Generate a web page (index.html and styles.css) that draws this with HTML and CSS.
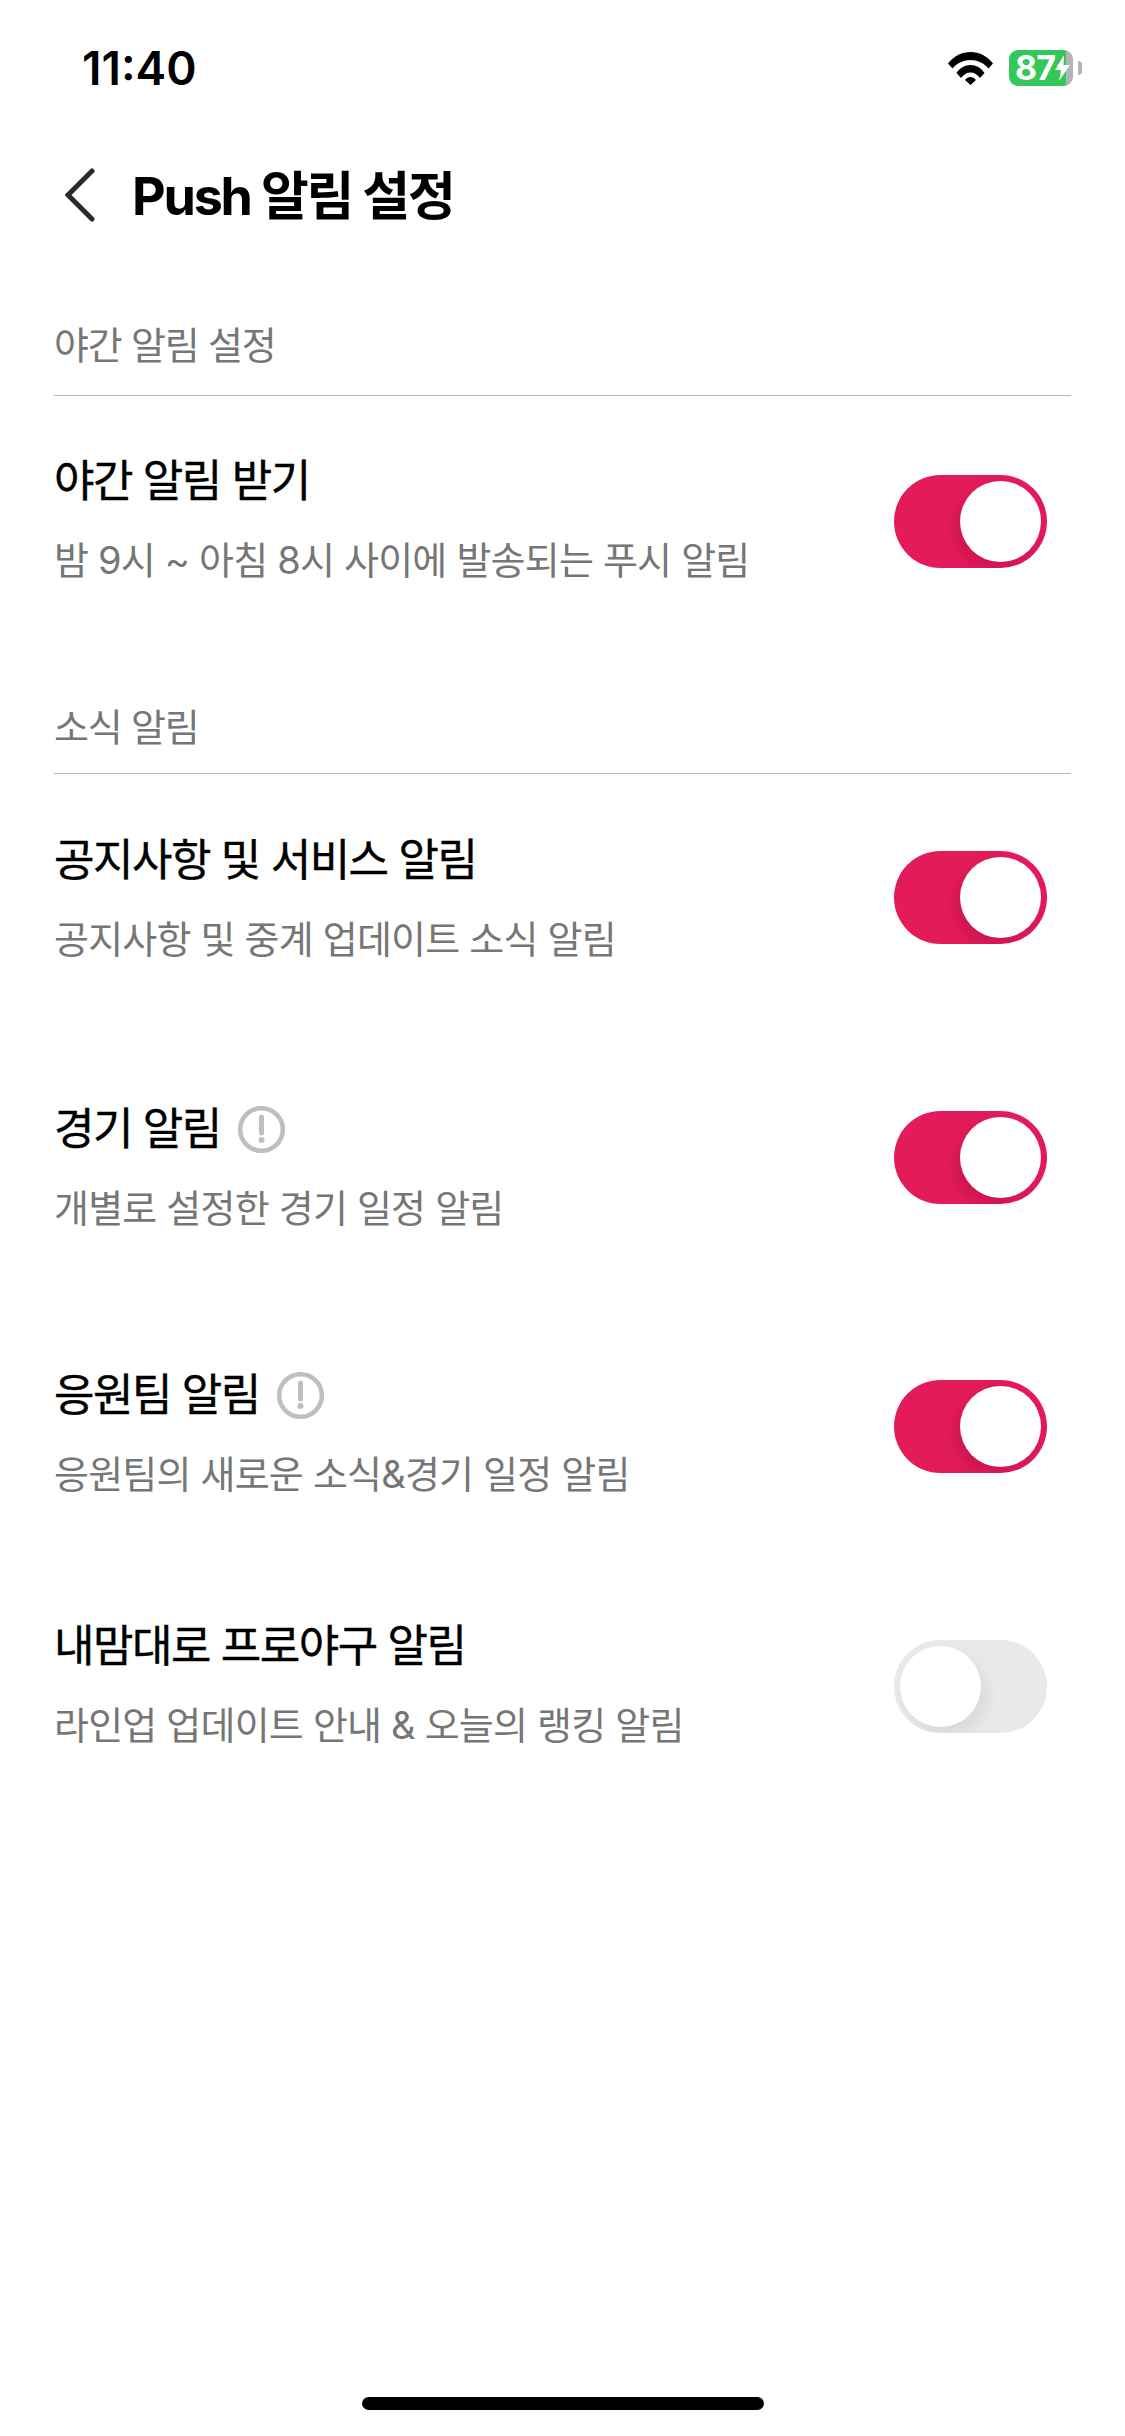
FILE: index.html
```html
<!DOCTYPE html>
<html lang="ko">
<head>
<meta charset="utf-8">
<title>Push 알림 설정</title>
<link rel="stylesheet" href="styles.css">
</head>
<body>
<div class="screen">
  <header class="status">
    <span class="time">11:40</span>
    <div class="status-icons">
      <svg class="wifi" width="45" height="33" viewBox="0 0 45 33"><path d="M0 11.500C12 -3.800 33 -3.800 45 11.500L40.500 16.500C31 5 14 5 4.500 16.500Z M8.500 21C15 10.300 30 10.300 36.500 21L32 26C27 18.500 18 18.500 13 26Z M17 28C20 24 25 24 28 28L22.500 33Z" fill="#000"/></svg>
      <div class="battery">
        <div class="battery-body"><span class="battery-text">87</span>
          <svg class="bolt" width="15" height="26" viewBox="0 0 15 26"><path d="M9 0L0 15H6L4 26L15 10H8.500Z" fill="#fff"/></svg>
        </div>
        <div class="battery-cap"></div>
      </div>
    </div>
  </header>
  <nav class="nav">
    <svg class="back" width="30" height="54" viewBox="0 0 30 54"><path d="M27 3L3 27L27 51" fill="none" stroke="#2a2a2a" stroke-width="5" stroke-linecap="round" stroke-linejoin="miter"/></svg>
    <h1 class="title">Push 알림 설정</h1>
  </nav>
  <main class="content">
    <section class="section first">
      <h2 class="section-label">야간 알림 설정</h2>
      <div class="row">
        <div class="row-text">
          <div class="row-title">야간 알림 받기</div>
          <div class="row-desc">밤 9시 ~ 아침 8시 사이에 발송되는 푸시 알림</div>
        </div>
        <div class="toggle on"><div class="knob"></div></div>
      </div>
    </section>
    <section class="section second">
      <h2 class="section-label">소식 알림</h2>
      <div class="rows">
        <div class="row">
          <div class="row-text low">
            <div class="row-title">공지사항 및 서비스 알림</div>
            <div class="row-desc">공지사항 및 중계 업데이트 소식 알림</div>
          </div>
          <div class="toggle on"><div class="knob"></div></div>
        </div>
        <div class="row">
          <div class="row-text with-icon low">
            <div class="row-title">경기 알림
              <svg class="info" width="47" height="47" viewBox="0 0 47 47"><circle cx="23.500" cy="23.500" r="21.300" fill="none" stroke="#bfbfbf" stroke-width="4.500"/><path d="M23.500 11V27" stroke="#bfbfbf" stroke-width="5" stroke-linecap="round"/><circle cx="23.500" cy="34" r="3" fill="#bfbfbf"/></svg>
            </div>
            <div class="row-desc">개별로 설정한 경기 일정 알림</div>
          </div>
          <div class="toggle on"><div class="knob"></div></div>
        </div>
        <div class="row">
          <div class="row-text with-icon">
            <div class="row-title">응원팀 알림
              <svg class="info" width="47" height="47" viewBox="0 0 47 47"><circle cx="23.500" cy="23.500" r="21.300" fill="none" stroke="#bfbfbf" stroke-width="4.500"/><path d="M23.500 11V27" stroke="#bfbfbf" stroke-width="5" stroke-linecap="round"/><circle cx="23.500" cy="34" r="3" fill="#bfbfbf"/></svg>
            </div>
            <div class="row-desc">응원팀의 새로운 소식&amp;경기 일정 알림</div>
          </div>
          <div class="toggle on"><div class="knob"></div></div>
        </div>
        <div class="row">
          <div class="row-text">
            <div class="row-title">내맘대로 프로야구 알림</div>
            <div class="row-desc">라인업 업데이트 안내 &amp; 오늘의 랭킹 알림</div>
          </div>
          <div class="toggle off"><div class="knob"></div></div>
        </div>
      </div>
    </section>
  </main>
  <div class="home-indicator"></div>
</div>
</body>
</html>
```
FILE: styles.css
```css
* { box-sizing: border-box; }
html, body { margin: 0; padding: 0; background: #fff; }
body {
  font-family: "Inter", "Noto Sans CJK KR", sans-serif;
  color: #000;
}
.screen {
  width: 1125px;
  height: 2436px;
  display: flex;
  flex-direction: column;
  overflow: hidden;
}
.status {
  height: 136px;
  padding: 40px 43px 0 82px;
  display: flex;
  justify-content: space-between;
  align-items: flex-start;
}
.time { font-size: 46px; font-weight: 600; line-height: 56px; }
.status-icons { display: flex; gap: 16px; align-items: center; height: 56px; }
.wifi { display: block; }
.battery { display: flex; align-items: center; }
.battery-body {
  width: 64px;
  height: 36px;
  border-radius: 9px;
  background: linear-gradient(90deg, #34c759 0 57px, #b4b4b6 57px);
  display: flex;
  align-items: center;
  padding-left: 6px;
}
.battery-text { font-size: 34px; font-weight: 700; color: #fff; line-height: 36px; letter-spacing: -0.8px; }
.bolt { flex: none; }
.battery-cap { width: 4px; height: 14px; background: #b4b4b6; border-radius: 0 4px 4px 0; margin-left: 5px; }
.nav {
  height: 118px;
  padding-left: 65px;
  display: flex;
  align-items: center;
  gap: 37px;
}
.back { display: block; flex: none; }
.title {
  margin: 3px 0 0;
  font-size: 52px;
  font-weight: 700;
  line-height: 64px;
  letter-spacing: -2.2px;
}
.content { padding: 0 54px; }
.section-label {
  margin: 0;
  font-size: 38px;
  font-weight: 400;
  line-height: 50px;
  letter-spacing: -1.2px;
  color: #767676;
  border-bottom: 1px solid #b8b8b8;
  padding-bottom: 25px;
}
.section.first { padding-top: 66px; }
.section.first .row { margin-top: 62px; }
.section.second { padding-top: 117px; }
.section.second .section-label { padding-bottom: 21px; }
.rows { display: flex; flex-direction: column; gap: 124px; margin-top: 60px; }
.row { display: flex; justify-content: space-between; align-items: center; }
.row-text { display: flex; flex-direction: column; gap: 27px; margin-top: -4px; }
.row-text.low { margin-top: -1px; margin-bottom: -3px; }
.row-text.with-icon { padding-top: 18px; }
.row-title {
  font-size: 44px;
  line-height: 54px;
  font-weight: 400;
  letter-spacing: -1.5px;
  -webkit-text-stroke: 0.4px #000;
  display: flex;
  align-items: center;
  gap: 17px;
}
.row-desc { font-size: 38px; line-height: 50px; letter-spacing: -0.8px; color: #767676; }
.toggle {
  width: 153px;
  height: 93px;
  border-radius: 47px;
  margin-right: 24px;
  position: relative;
  flex: none;
  overflow: hidden;
}
.toggle.on { background: #e41b5a; }
.toggle.off { background: #e9e9e9; }
.knob {
  position: absolute;
  top: 6px;
  width: 81px;
  height: 81px;
  border-radius: 50%;
  background: #fff;
}
.toggle.on .knob { right: 6px; box-shadow: -6px 8px 14px rgba(120, 0, 50, 0.2); }
.toggle.off .knob { left: 6px; box-shadow: 6px 8px 14px rgba(0, 0, 0, 0.07); }
.info { display: block; flex: none; }
.home-indicator {
  margin-top: auto;
  margin-bottom: 26px;
  align-self: center;
  width: 402px;
  height: 13px;
  border-radius: 7px;
  background: #000;
}
```
